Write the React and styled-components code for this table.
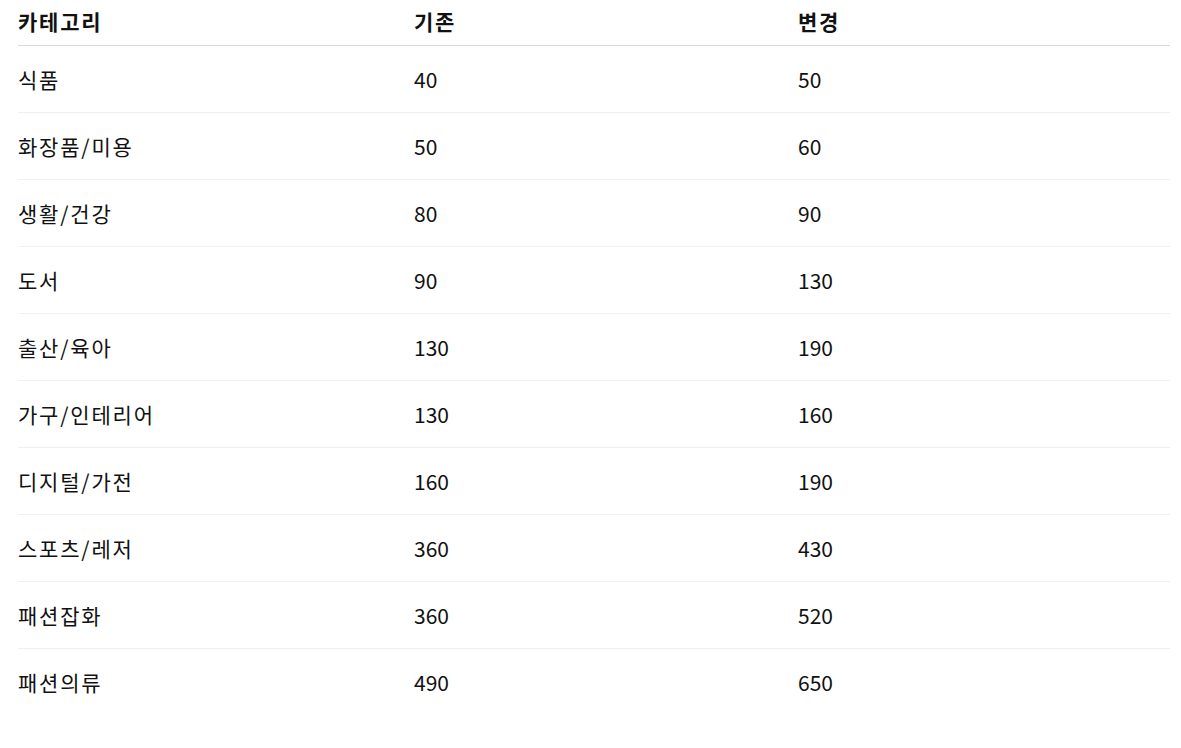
import React from 'react'
import styled, { createGlobalStyle } from 'styled-components'

const GlobalStyle = createGlobalStyle`
  body {
    margin: 0;
    background: #ffffff;
    font-family: "Noto Sans CJK KR", "Noto Sans", sans-serif;
    color: #111111;
  }
`

const rows = [
  { name: '식품', before: 40, after: 50 },
  { name: '화장품/미용', before: 50, after: 60 },
  { name: '생활/건강', before: 80, after: 90 },
  { name: '도서', before: 90, after: 130 },
  { name: '출산/육아', before: 130, after: 190 },
  { name: '가구/인테리어', before: 130, after: 160 },
  { name: '디지털/가전', before: 160, after: 190 },
  { name: '스포츠/레저', before: 360, after: 430 },
  { name: '패션잡화', before: 360, after: 520 },
  { name: '패션의류', before: 490, after: 650 },
]

const Wrapper = styled.div`
  padding: 0 11px 0 18px;
`

const Table = styled.div`
  display: flex;
  flex-direction: column;
`

const Row = styled.div`
  display: grid;
  grid-template-columns: 396px 384px 1fr;
  align-items: center;
  height: ${(props) => (props.head ? '45px' : '66px')};
  border-bottom: 1px solid ${(props) => (props.head ? '#d9d9d9' : props.last ? 'transparent' : '#f0f0f0')};
`

const Cell = styled.div`
  font-size: 21px;
  font-weight: ${(props) => (props.head ? 700 : 400)};
  letter-spacing: ${(props) => (props.text ? '1.8px' : '0')};
  line-height: 1;
  padding-bottom: ${(props) => (props.head ? '3px' : '0')};
`

const App = () => {
  return (
    <Wrapper>
      <GlobalStyle />
      <Table>
        <Row head>
          <Cell head text>카테고리</Cell>
          <Cell head text>기존</Cell>
          <Cell head text>변경</Cell>
        </Row>
        {rows.map((item, i) => (
          <Row key={item.name} last={i === rows.length - 1}>
            <Cell text>{item.name}</Cell>
            <Cell>{item.before}</Cell>
            <Cell>{item.after}</Cell>
          </Row>
        ))}
      </Table>
    </Wrapper>
  )
}

export default App
